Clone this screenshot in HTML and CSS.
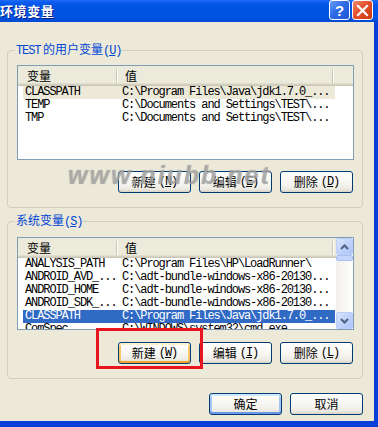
FILE: index.html
```html
<!DOCTYPE html>
<html lang="zh-CN">
<head>
<meta charset="utf-8">
<title>环境变量</title>
<link rel="stylesheet" href="styles.css">
</head>
<body>
<div class="window">
  <div class="titlebar">
    <span class="title">环境变量</span>
    <div class="tbtns">
      <span class="tb help">?</span>
      <span class="tb close"><svg width="13" height="13" viewBox="0 0 13 13"><path d="M2 2 L11 11 M11 2 L2 11" stroke="#fff" stroke-width="2.2" stroke-linecap="square"/></svg></span>
    </div>
  </div>
  <div class="client">
    <fieldset class="group g1">
      <legend><span class="mono">TEST</span> 的用户变量<span class="mono">(<u>U</u>)</span></legend>
      <div class="list l1">
        <div class="lmain">
          <div class="lhead">
            <div class="hc c1">变量</div><span class="sep"></span>
            <div class="hc c2">值</div><span class="sep"></span>
            <div class="hc c3"></div>
          </div>
          <div class="row inactive"><span class="cell k">CLASSPATH</span><span class="cell v">C:\Program Files\Java\jdk1.7.0_...</span></div>
          <div class="row"><span class="cell k">TEMP</span><span class="cell v">C:\Documents and Settings\TEST\...</span></div>
          <div class="row"><span class="cell k">TMP</span><span class="cell v">C:\Documents and Settings\TEST\...</span></div>
        </div>
      </div>
      <div class="btnrow">
        <button class="btn">新建<span class="mono">(<u>N</u>)</span></button>
        <button class="btn">编辑<span class="mono">(<u>E</u>)</span></button>
        <button class="btn">删除<span class="mono">(<u>D</u>)</span></button>
      </div>
    </fieldset>

    <fieldset class="group g2">
      <legend>系统变量<span class="mono">(<u>S</u>)</span></legend>
      <div class="list l2">
        <div class="lmain">
          <div class="lhead">
            <div class="hc c1">变量</div><span class="sep"></span>
            <div class="hc c2">值</div><span class="sep"></span>
            <div class="hc c3"></div>
          </div>
          <div class="rows">
            <div class="row"><span class="cell k">ANALYSIS_PATH</span><span class="cell v">C:\Program Files\HP\LoadRunner\</span></div>
            <div class="row"><span class="cell k">ANDROID_AVD_...</span><span class="cell v">C:\adt-bundle-windows-x86-20130...</span></div>
            <div class="row"><span class="cell k">ANDROID_HOME</span><span class="cell v">C:\adt-bundle-windows-x86-20130...</span></div>
            <div class="row"><span class="cell k">ANDROID_SDK_...</span><span class="cell v">C:\adt-bundle-windows-x86-20130...</span></div>
            <div class="row selected"><span class="cell k">CLASSPATH</span><span class="cell v">C:\Program Files\Java\jdk1.7.0_...</span></div>
            <div class="row"><span class="cell k">ComSpec</span><span class="cell v">C:\WINDOWS\system32\cmd.exe</span></div>
          </div>
        </div>
        <div class="vscroll">
          <span class="sbtn"><svg width="9" height="6" viewBox="0 0 9 6"><path d="M1 5 L4.5 1.5 L8 5" fill="none" stroke="#4D6185" stroke-width="2"/></svg></span>
          <span class="thumb"></span>
          <span class="track"></span>
          <span class="sbtn"><svg width="9" height="6" viewBox="0 0 9 6"><path d="M1 1 L4.5 4.5 L8 1" fill="none" stroke="#4D6185" stroke-width="2"/></svg></span>
        </div>
      </div>
      <div class="btnrow b2">
        <button class="btn hot">新建<span class="mono">(<u>W</u>)</span></button>
        <button class="btn">编辑<span class="mono">(<u>I</u>)</span></button>
        <button class="btn">删除<span class="mono">(<u>L</u>)</span></button>
      </div>
    </fieldset>

    <div class="okrow">
      <button class="btn default">确定</button>
      <button class="btn">取消</button>
    </div>
  </div>
  <div class="redbox"></div>
  <div class="watermark">www.niubb.net</div>
</div>
</body>
</html>
```

FILE: styles.css
```css
* { box-sizing: border-box; }
html, body { margin: 0; padding: 0; }
body {
  width: 378px;
  height: 427px;
  overflow: hidden;
  font-family: "Noto Sans CJK SC", "Liberation Sans", sans-serif;
  font-size: 12px;
  color: #000;
}
.window {
  position: relative;
  width: 378px;
  height: 427px;
  display: flex;
  flex-direction: column;
  background: #0A3FD8;
}
.titlebar {
  height: 22px;
  flex: none;
  display: flex;
  align-items: center;
  justify-content: space-between;
  padding-right: 5px;
  background: linear-gradient(#1F6CF5 0%, #0A5AEE 12%, #0054E3 30%, #0054E3 75%, #0049D2 100%);
}
.title {
  color: #fff;
  font-weight: bold;
  font-size: 13px;
  letter-spacing: 0.6px;
  line-height: 16px;
  margin-top: -1px;
  text-shadow: 1px 1px 0 #0A1E8A;
}
.tbtns { display: flex; gap: 2px; margin-top: -2px; }
.tb {
  width: 21px;
  height: 20px;
  border: 1px solid #fff;
  border-radius: 3px;
  display: flex;
  align-items: center;
  justify-content: center;
  color: #fff;
}
.help {
  background: linear-gradient(135deg, #6A9CF8 0%, #2E6BE6 45%, #1F56D8 100%);
  font-family: "Liberation Sans", sans-serif;
  font-weight: bold;
  font-size: 15px;
}
.close {
  background: linear-gradient(135deg, #EE8A6C 0%, #E2502E 45%, #C8370F 100%);
}
.client {
  flex: 1;
  margin-right: 4px;
  margin-bottom: 6px;
  background: #ECE9D8;
  padding: 20px 0 0 7px;
}
.mono {
  font-family: "Liberation Mono", "DejaVu Sans Mono", monospace;
  font-size: 12px;
  letter-spacing: -1.1px;
}
.group {
  width: 356px;
  margin: 0;
  border: 1px solid #D0D0BF;
  border-radius: 4px;
  padding: 7px 8px 14px 9px;
  min-width: 0;
}
.group legend {
  color: #0046D5;
  line-height: 14px;
  padding: 0 1px;
  margin-left: -2px;
}
.g2 { margin-top: 5px; padding-top: 8px; }
.list {
  width: 337px;
  border: 1px solid #7F9DB9;
  background: #fff;
  display: flex;
  overflow: hidden;
}
.l1 { height: 95px; }
.l2 { height: 93px; }
.lmain { flex: 1; min-width: 0; overflow: hidden; }
.lhead {
  height: 20px;
  display: flex;
  align-items: center;
  background: #EBEADB;
  box-shadow: inset 0 -1px #CBC7B8, inset 0 -2px #D6D2C2, inset 0 -3px #E2DECD;
}
.hc { height: 20px; line-height: 19px; }
.hc.c1 { width: 98px; padding-left: 9px; }
.hc.c2 { width: 215px; padding-left: 8px; }
.hc.c3 { flex: 1; }
.sep {
  width: 1px;
  height: 14px;
  background: #C7C5B2;
  box-shadow: 1px 0 #fff;
  flex: none;
}
.row {
  display: flex;
  height: 13px;
  line-height: 13px;
  width: 312px;
  margin-left: 5px;
  font-family: "Liberation Mono", "DejaVu Sans Mono", monospace;
  font-size: 12px;
  letter-spacing: -1.1px;
  white-space: nowrap;
  overflow: hidden;
}
.cell.k { width: 94px; padding-left: 2px; flex: none; }
.cell.v { padding-left: 5px; }
.row.inactive { background: #ECE9D8; }
.row.selected { background: #316AC5; color: #fff; }
.vscroll {
  width: 17px;
  flex: none;
  display: flex;
  flex-direction: column;
  background: linear-gradient(90deg, #F3F1EC, #FEFEFB);
}
.sbtn {
  height: 17px;
  flex: none;
  border: 1px solid #BACEF8;
  border-radius: 2px;
  background: linear-gradient(135deg, #D9E5FD 0%, #C1D3FB 50%, #AEC6F7 100%);
  display: flex;
  align-items: center;
  justify-content: center;
}
.thumb {
  height: 6px;
  flex: none;
  border: 1px solid #A9C0F3;
  border-radius: 2px;
  background: #C6D6FB;
}
.track { flex: 1; }
.btnrow {
  display: flex;
  justify-content: flex-end;
  gap: 8px;
  margin-top: 11px;
  padding-right: 1px;
}
.b2 { margin-top: 12px; }
.btn {
  width: 73px;
  height: 22px;
  border: 1px solid #003C74;
  border-radius: 3px;
  background: linear-gradient(#FFFFFF 0%, #F5F4EF 60%, #ECEAE2 85%, #D8D3C6 100%);
  font-family: "Noto Sans CJK SC", sans-serif;
  font-size: 12px;
  line-height: 14px;
  color: #000;
  padding: 0;
  display: flex;
  align-items: center;
  justify-content: center;
  gap: 3px;
}
.btn.hot {
  box-shadow: inset 0 2px #FFF0CF, inset 0 -2px #F1A42A, inset 2px 0 #F9C66A, inset -2px 0 #F9C66A;
}
.btn.default {
  box-shadow: inset 0 2px #CEE7FF, inset 0 -2px #6C97E9, inset 2px 0 #A7C4F4, inset -2px 0 #A7C4F4;
}
.okrow {
  display: flex;
  justify-content: flex-end;
  gap: 8px;
  margin-top: 14px;
  width: 356px;
}
.redbox {
  position: absolute;
  left: 96px;
  top: 328px;
  width: 107px;
  height: 41px;
  border: 3px solid #E8141E;
}
.watermark {
  position: absolute;
  left: 68px;
  top: 161px;
  font-family: "Liberation Sans", sans-serif;
  font-weight: bold;
  font-style: italic;
  font-size: 25px;
  letter-spacing: 2px;
  color: rgba(175, 175, 175, 0.7);
  text-shadow: 0 0 1px rgba(110, 110, 110, 0.6);
  pointer-events: none;
}
```
